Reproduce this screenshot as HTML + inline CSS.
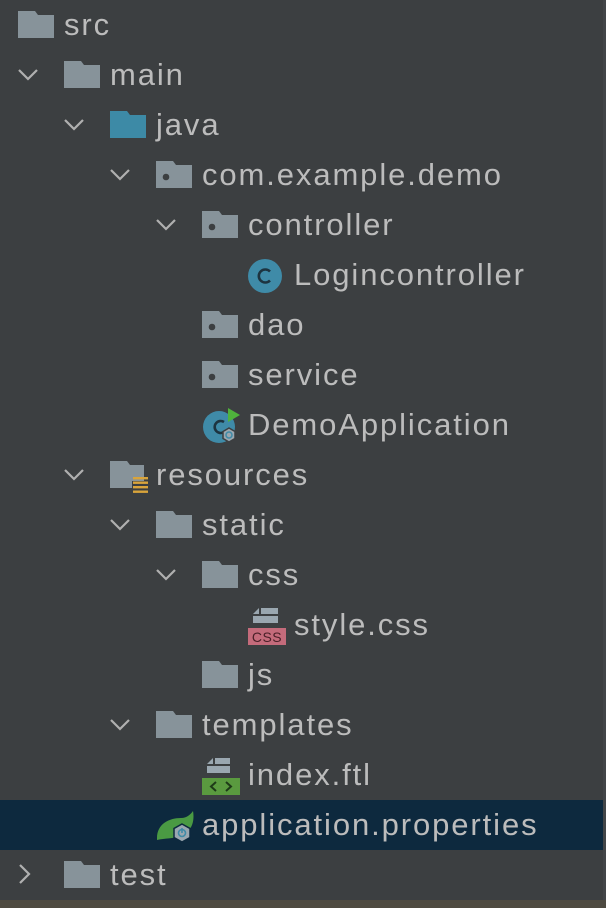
<!DOCTYPE html>
<html><head><meta charset="utf-8"><style>
html,body{margin:0;padding:0;}
body{width:606px;height:908px;background:#3c3f41;position:relative;overflow:hidden;font-family:"Liberation Sans",sans-serif;}
.row{position:absolute;left:0;width:603px;height:50px;}
.sel{background:#0d293e;}
.t{position:absolute;top:0;line-height:50px;font-size:31px;color:#bcbcbc;letter-spacing:1.9px;white-space:nowrap;}
svg{position:absolute;}
.bot{position:absolute;left:0;top:900px;width:606px;height:8px;background:#4e4a41;}
.sb{position:absolute;left:603px;top:0;width:3px;height:908px;background:#424548;}
</style></head><body>
<svg width="0" height="0" style="position:absolute">
<defs>
<symbol id="f" viewBox="0 0 36 28"><path d="M0 0H17L20 4H36V27H0Z" fill="#87939a"/></symbol>
<symbol id="fj" viewBox="0 0 36 28"><path d="M0 0H17L20 4H36V27H0Z" fill="#3d8aa6"/></symbol>
<symbol id="fp" viewBox="0 0 36 28"><path d="M0 0H17L20 4H36V27H0Z" fill="#87939a"/><circle cx="10" cy="16" r="3.3" fill="#3c3f41"/></symbol>
<symbol id="cd" viewBox="0 0 22 14"><path d="M2 2L11 11L20 2" fill="none" stroke="#b0b0b0" stroke-width="2.2"/></symbol>
<symbol id="cr" viewBox="0 0 14 22"><path d="M2 2L11 11L2 20" fill="none" stroke="#b0b0b0" stroke-width="2.2"/></symbol>
</defs></svg>

<svg style="left:18px;top:11px" width="36" height="28"><use href="#f"/></svg>
<div class="t" style="left:64px;top:0">src</div>
<svg style="left:17px;top:68px" width="22" height="14"><use href="#cd"/></svg>
<svg style="left:64px;top:61px" width="36" height="28"><use href="#f"/></svg>
<div class="t" style="left:110px;top:50px">main</div>
<svg style="left:63px;top:118px" width="22" height="14"><use href="#cd"/></svg>
<svg style="left:110px;top:111px" width="36" height="28"><use href="#fj"/></svg>
<div class="t" style="left:156px;top:100px">java</div>
<svg style="left:109px;top:168px" width="22" height="14"><use href="#cd"/></svg>
<svg style="left:156px;top:161px" width="36" height="28"><use href="#fp"/></svg>
<div class="t" style="left:202px;top:150px">com.example.demo</div>
<svg style="left:155px;top:218px" width="22" height="14"><use href="#cd"/></svg>
<svg style="left:202px;top:211px" width="36" height="28"><use href="#fp"/></svg>
<div class="t" style="left:248px;top:200px">controller</div>
<svg style="left:248px;top:258px" width="36" height="36"><circle cx="17" cy="18" r="17" fill="#3f8ba8"/><path d="M22 13.5A6.5 6.5 0 1 0 22 22.5" fill="none" stroke="#1d3440" stroke-width="2.6"/></svg>
<div class="t" style="left:294px;top:250px">Logincontroller</div>
<svg style="left:202px;top:311px" width="36" height="28"><use href="#fp"/></svg>
<div class="t" style="left:248px;top:300px">dao</div>
<svg style="left:202px;top:361px" width="36" height="28"><use href="#fp"/></svg>
<div class="t" style="left:248px;top:350px">service</div>
<svg style="left:202px;top:405px" width="42" height="42"><circle cx="17" cy="22" r="16" fill="#3f8ba8"/><path d="M22 17A6 6 0 1 0 22 27" fill="none" stroke="#1d3440" stroke-width="2.6"/><path d="M26 3L38 10L26 17Z" fill="#4fb33c"/><path d="M27 23L33 26.5V33.5L27 37L21 33.5V26.5Z" fill="#9aa7b0" stroke="#3c3f41" stroke-width="1.5"/><circle cx="27" cy="30" r="3" fill="none" stroke="#3f8ba8" stroke-width="1.5"/></svg>
<div class="t" style="left:248px;top:400px">DemoApplication</div>
<svg style="left:63px;top:468px" width="22" height="14"><use href="#cd"/></svg>
<svg style="left:110px;top:461px" width="40" height="36"><path d="M0 0H17L20 4H34V20H22V27H0Z" fill="#87939a"/><g fill="#d9a43b"><rect x="23" y="16" width="15" height="2.4"/><rect x="23" y="20.5" width="15" height="2.4"/><rect x="23" y="25" width="15" height="2.4"/><rect x="23" y="29.5" width="15" height="2.4"/></g></svg>
<div class="t" style="left:156px;top:450px">resources</div>
<svg style="left:109px;top:518px" width="22" height="14"><use href="#cd"/></svg>
<svg style="left:156px;top:511px" width="36" height="28"><use href="#f"/></svg>
<div class="t" style="left:202px;top:500px">static</div>
<svg style="left:155px;top:568px" width="22" height="14"><use href="#cd"/></svg>
<svg style="left:202px;top:561px" width="36" height="28"><use href="#f"/></svg>
<div class="t" style="left:248px;top:550px">css</div>
<svg style="left:248px;top:607px" width="40" height="40"><path d="M5 7L11 1V7Z" fill="#9aa7b0"/><rect x="13" y="1" width="17" height="6" fill="#9aa7b0"/><rect x="5" y="9" width="25" height="7" fill="#9aa7b0"/><rect x="0" y="21" width="38" height="17" fill="#c46b7b"/><text x="19" y="35" font-family="Liberation Sans,sans-serif" font-size="14" fill="#4a2028" text-anchor="middle" letter-spacing="0.5">CSS</text></svg>
<div class="t" style="left:294px;top:600px">style.css</div>
<svg style="left:202px;top:661px" width="36" height="28"><use href="#f"/></svg>
<div class="t" style="left:248px;top:650px">js</div>
<svg style="left:109px;top:718px" width="22" height="14"><use href="#cd"/></svg>
<svg style="left:156px;top:711px" width="36" height="28"><use href="#f"/></svg>
<div class="t" style="left:202px;top:700px">templates</div>
<svg style="left:202px;top:757px" width="40" height="40"><path d="M5 7L11 1V7Z" fill="#9aa7b0"/><rect x="13" y="1" width="15" height="6" fill="#9aa7b0"/><rect x="5" y="9" width="23" height="7" fill="#9aa7b0"/><rect x="0" y="21" width="38" height="17" fill="#5a9a3f"/><path d="M14 25L9 29.5L14 34M24 25L29 29.5L24 34" fill="none" stroke="#1e3a18" stroke-width="2"/></svg>
<div class="t" style="left:248px;top:750px">index.ftl</div>
<div class="row sel" style="top:800px"></div>
<svg style="left:155px;top:808px" width="44" height="40"><path d="M2 30C2 16 14 10 26 10C32 10 36 6 38 3C40 14 36 24 26 28C18 31 10 30 2 32Z" fill="#4a9a43"/><path d="M27 16L35 20.5V29.5L27 34L19 29.5V20.5Z" fill="#9aa7b0" stroke="#0d293e" stroke-width="1.5"/><circle cx="27" cy="25" r="3.5" fill="none" stroke="#3f8ba8" stroke-width="1.6"/><path d="M27 20V25" stroke="#3f8ba8" stroke-width="1.6"/></svg>
<div class="t" style="left:202px;top:800px">application.properties</div>
<svg style="left:18px;top:863px" width="14" height="22"><use href="#cr"/></svg>
<svg style="left:64px;top:861px" width="36" height="28"><use href="#f"/></svg>
<div class="t" style="left:110px;top:850px">test</div>

<div class="sb"></div>
<div class="bot"></div>
</body></html>
